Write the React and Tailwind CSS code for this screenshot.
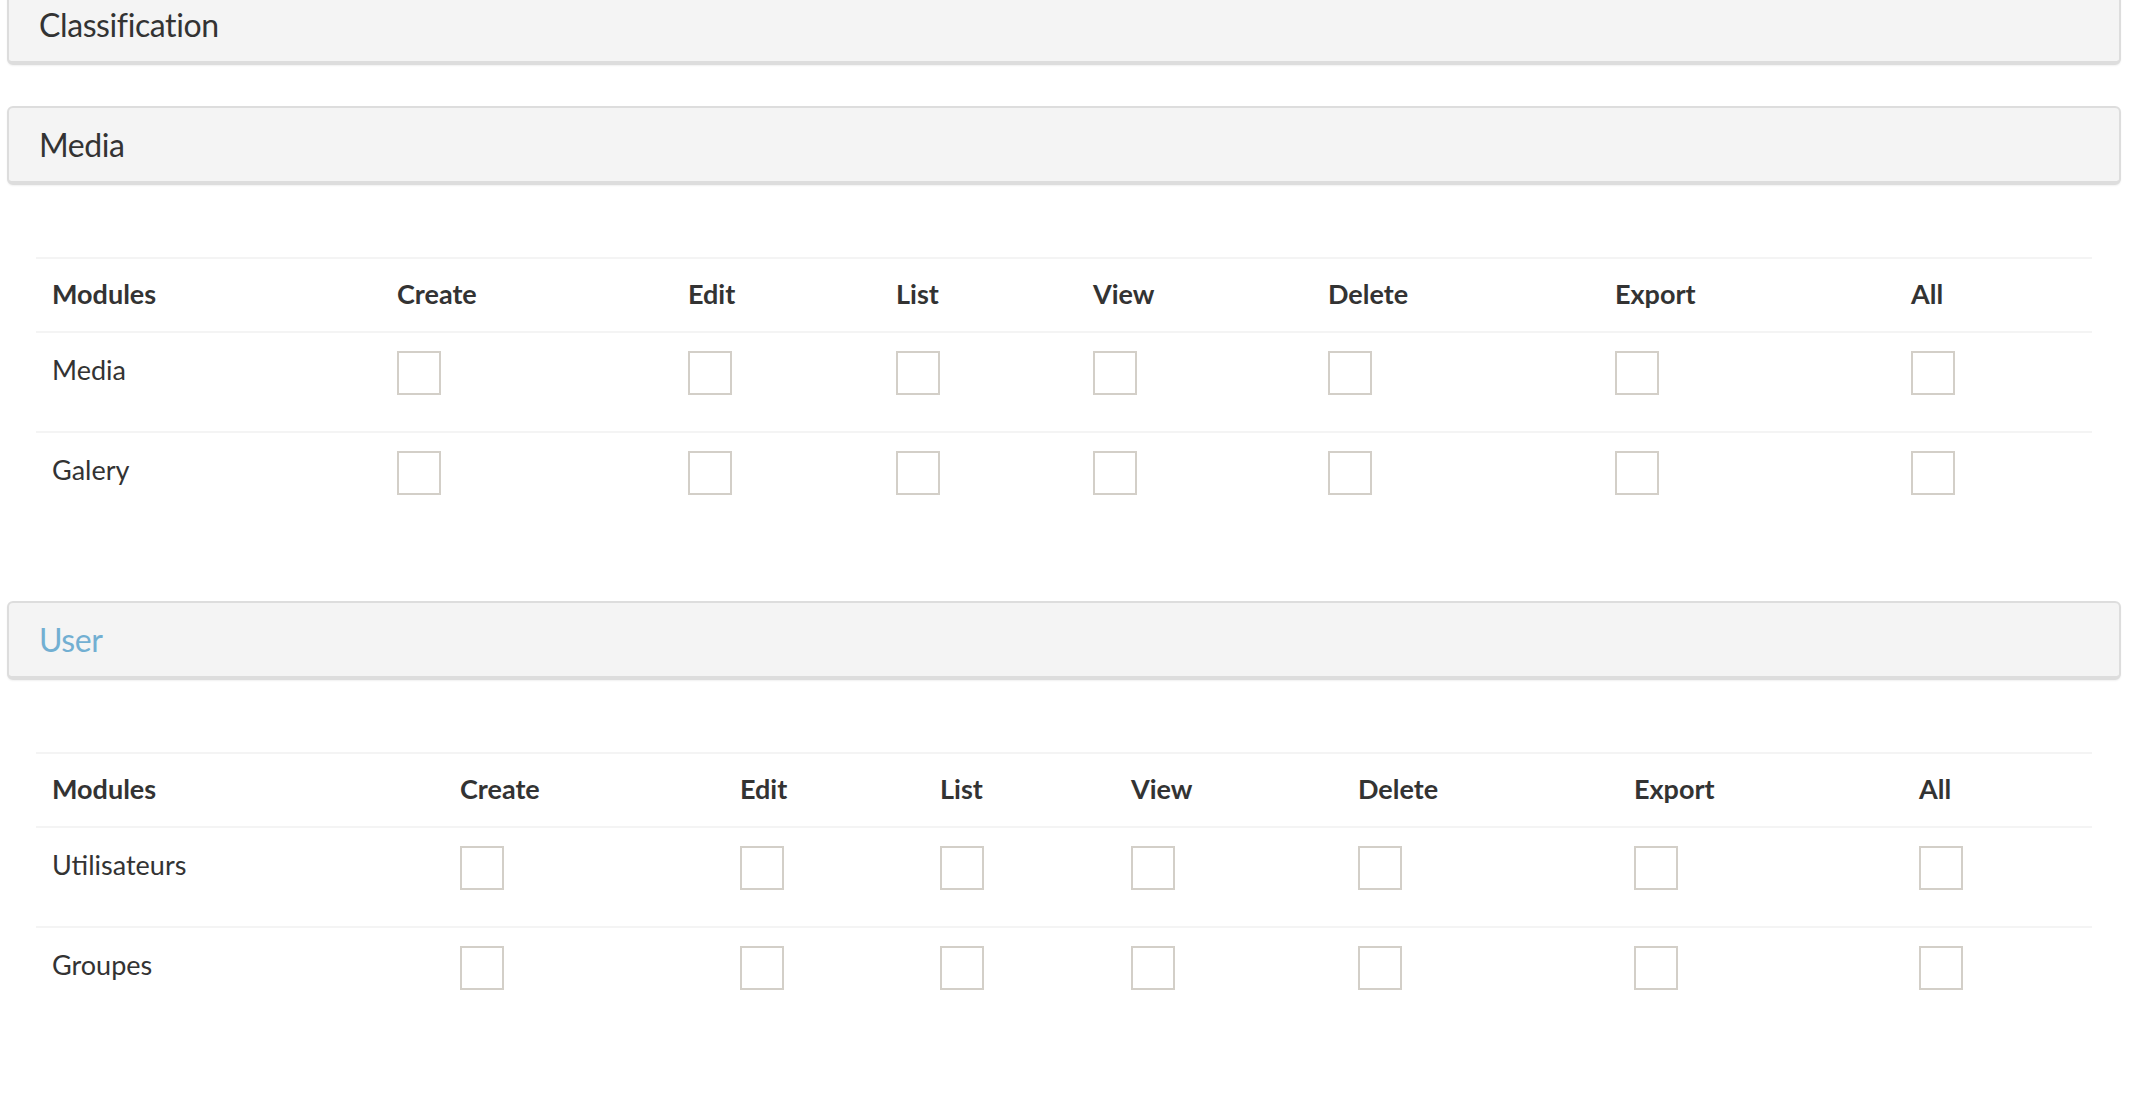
import React from "react";

const COLS = ["Create", "Edit", "List", "View", "Delete", "Export", "All"];

const MEDIA_W = ["w-[345px]", "w-[291px]", "w-[208px]", "w-[197px]", "w-[235px]", "w-[287px]", "w-[296px]", "w-[197px]"];
const USER_W = ["w-[408px]", "w-[280px]", "w-[200px]", "w-[191px]", "w-[227px]", "w-[276px]", "w-[285px]", "w-[189px]"];

function BoxHeader({ title, blue }) {
  return (
    <div className="h-[79px] rounded-[6px] border-2 border-b-[4px] border-[#dddddd] bg-[#f4f4f4] shadow-[0_1px_2px_rgba(0,0,0,0.06)] flex items-center pl-[30px]">
      <span className={"text-[32px] leading-none tracking-[-0.4px] " + (blue ? "text-[#72afd2]" : "text-[#333333]")}>{title}</span>
    </div>
  );
}

function Checkbox() {
  return <div className="w-[44px] h-[44px] border-2 border-[#d3cfc8] bg-white mt-[2px]" />;
}

function PermTable({ widths, rows }) {
  return (
    <table className="w-full table-fixed border-collapse text-[27px] text-[#333333]">
      <colgroup>
        {widths.map((w, i) => (
          <col key={i} className={w} />
        ))}
      </colgroup>
      <thead>
        <tr className="border-t-2 border-[#f4f4f4]">
          <th className="h-[74px] px-[16px] pb-[2px] text-left font-bold align-middle">Modules</th>
          {COLS.map((c) => (
            <th key={c} className="h-[74px] px-[16px] pb-[2px] text-left font-bold align-middle">
              {c}
            </th>
          ))}
        </tr>
      </thead>
      <tbody>
        {rows.map((r) => (
          <tr key={r} className="border-t-2 border-[#f4f4f4]">
            <td className="h-[100px] px-[16px] pt-[17px] align-top leading-[40px]">{r}</td>
            {COLS.map((c) => (
              <td key={c} className="h-[100px] px-[16px] pt-[16px] align-top">
                <Checkbox />
              </td>
            ))}
          </tr>
        ))}
      </tbody>
    </table>
  );
}

function Section({ title, blue, widths, rows }) {
  return (
    <section className="mt-[41px]">
      <BoxHeader title={title} blue={blue} />
      <div className="px-[29px] pt-[72px] pb-[28px]">
        <PermTable widths={widths} rows={rows} />
      </div>
    </section>
  );
}

export default function App() {
  return (
    <div
      className="w-[2142px] h-[1098px] overflow-hidden bg-white"
      style={{ fontFamily: "Lato, 'Open Sans', 'Noto Sans', sans-serif" }}
    >
      <div className="ml-[7px] w-[2114px] -mt-[14px]">
        <BoxHeader title="Classification" />
        <Section title="Media" widths={MEDIA_W} rows={["Media", "Galery"]} />
        <Section title="User" blue widths={USER_W} rows={["Utilisateurs", "Groupes"]} />
      </div>
    </div>
  );
}
